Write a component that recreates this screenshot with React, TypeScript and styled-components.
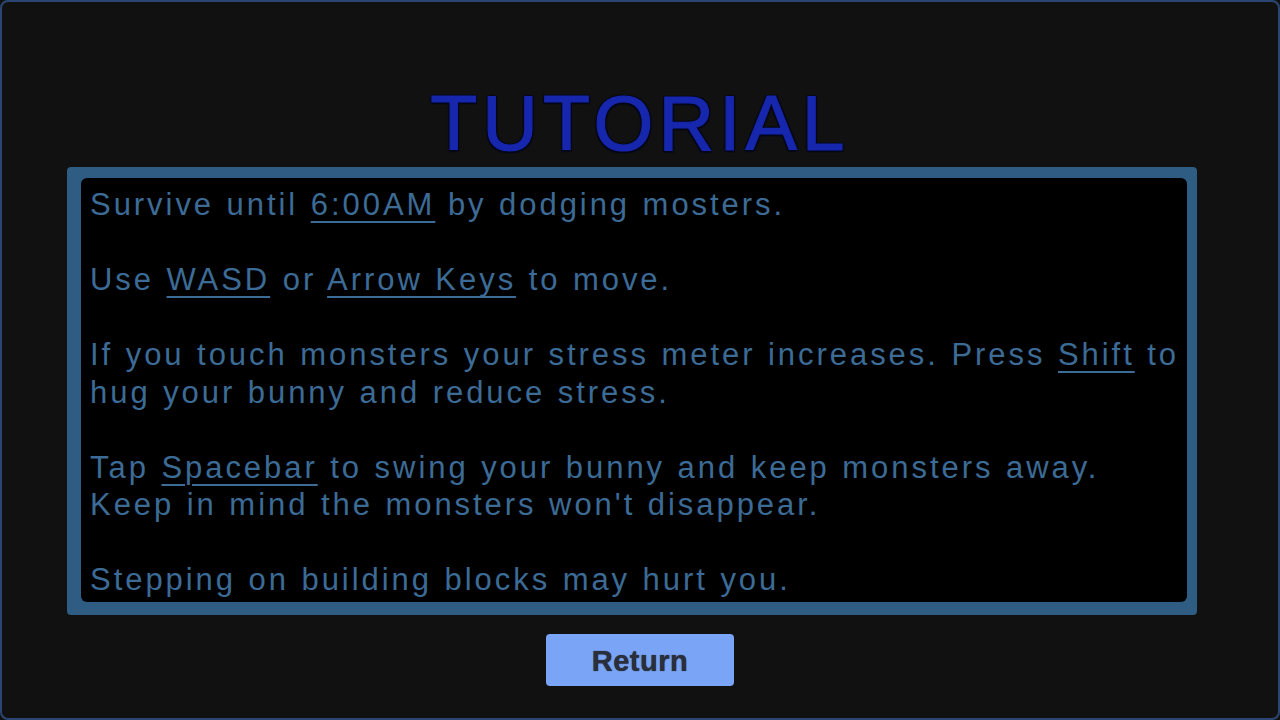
import styled, { createGlobalStyle } from 'styled-components';

const GlobalStyle = createGlobalStyle`
  html, body {
    margin: 0;
    padding: 0;
    background: #111111;
  }
`;

const Screen = styled.div`
  box-sizing: border-box;
  width: 1280px;
  height: 720px;
  background: #111111;
  border: 2px solid #2b4672;
  border-radius: 8px;
  display: flex;
  flex-direction: column;
  align-items: center;
  font-family: 'Liberation Sans', Arial, sans-serif;
`;

const Title = styled.h1`
  margin: 78px 0 0;
  font-size: 77px;
  font-weight: 400;
  line-height: 86px;
  letter-spacing: 5px;
  color: #1727ad;
  -webkit-text-stroke: 1.2px #1727ad;
  text-shadow:
    1.5px 1.5px 1px #03061a,
    -1.5px -1.5px 1px #03061a,
    1.5px -1.5px 1px #03061a,
    -1.5px 1.5px 1px #03061a;
`;

const Panel = styled.div`
  box-sizing: border-box;
  width: 1130px;
  margin: 1px 16px 0 0;
  padding: 11px 10px 13px 14px;
  background: #2e5c82;
  border-radius: 4px;
`;

const Body = styled.div`
  background: #000;
  border-radius: 6px;
  padding: 8px 9px 3px;
  color: #3c6b96;
  font-size: 31px;
  line-height: 37.5px;
  letter-spacing: 2.95px;
  word-spacing: 1px;
`;

const Line = styled.div<{ $gap?: boolean }>`
  white-space: nowrap;
  margin-top: ${(p) => (p.$gap ? '37.5px' : '0')};
`;

const Key = styled.span`
  text-decoration: underline;
  text-decoration-thickness: 2px;
  text-underline-offset: 6px;
`;

const ReturnButton = styled.button`
  margin-top: 19px;
  width: 188px;
  height: 52px;
  padding: 3px 0 0;
  border: none;
  border-radius: 4px;
  background: #7aa5f6;
  color: #2a2f3b;
  font-family: 'Liberation Sans', Arial, sans-serif;
  font-weight: 700;
  font-size: 29px;
  letter-spacing: 0.5px;
  text-shadow: 0 0 1px #1b2030;
  cursor: pointer;
`;

export default function App() {
  return (
    <>
      <GlobalStyle />
      <Screen>
        <Title>TUTORIAL</Title>
        <Panel>
          <Body>
            <Line>
              Survive until <Key>6:00AM</Key> by dodging mosters.
            </Line>
            <Line $gap>
              Use <Key>WASD</Key> or <Key>Arrow Keys</Key> to move.
            </Line>
            <Line $gap>
              If you touch monsters your stress meter increases. Press <Key>Shift</Key> to
            </Line>
            <Line>hug your bunny and reduce stress.</Line>
            <Line $gap>
              Tap <Key>Spacebar</Key> to swing your bunny and keep monsters away.
            </Line>
            <Line>Keep in mind the monsters won't disappear.</Line>
            <Line $gap>Stepping on building blocks may hurt you.</Line>
          </Body>
        </Panel>
        <ReturnButton>Return</ReturnButton>
      </Screen>
    </>
  );
}
